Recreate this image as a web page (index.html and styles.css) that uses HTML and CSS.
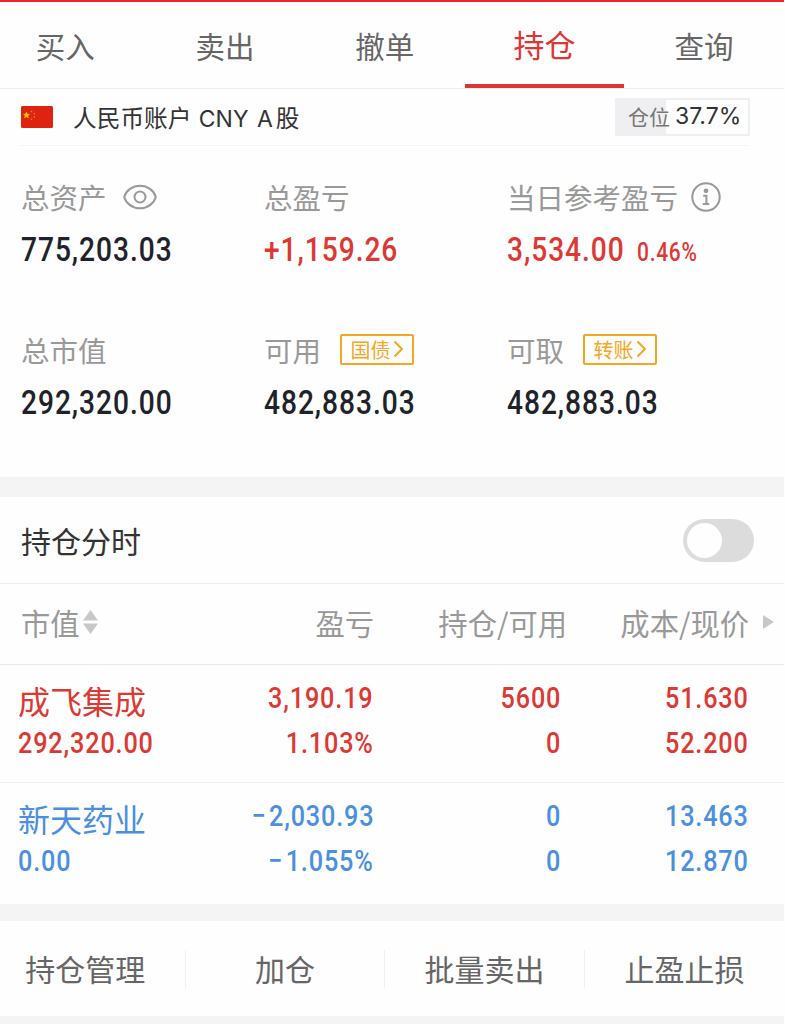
FILE: index.html
```html
<!DOCTYPE html>
<html lang="zh-CN">

<head>
    <meta charset="UTF-8">
    <meta name="viewport" content="width=device-width, initial-scale=1.0">
    <title>持仓</title>
    <link rel="stylesheet" href="styles.css">
</head>

<body>
    <div class="page">
        <div class="tabs">
            <div>买入</div>
            <div>卖出</div>
            <div>撤单</div>
            <div class="on">持仓</div>
            <div>查询</div>
        </div>

        <div class="account">
            <svg class="flag" width="32" height="22" viewBox="0 0 32 22">
                <rect width="32" height="22" rx="1.5" fill="#de2410" />
                <path d="M5.500 6.200l.9 1.900 2.100.2-1.600 1.400.5 2.100-1.900-1.100-1.900 1.100.5-2.100-1.600-1.400 2.100-.2z" fill="#ffd500" stroke="#ffb400" stroke-width=".6" />
                <g fill="#f08a1c">
                    <circle cx="10.500" cy="5.500" r=".8" />
                    <circle cx="13.300" cy="7.700" r=".8" />
                    <circle cx="13.300" cy="11" r=".8" />
                    <circle cx="10.500" cy="13.300" r=".8" />
                </g>
            </svg>
            <div class="name">人民币账户 <span>CNY A</span>股</div>
            <div class="position">仓位<span>37.7%</span></div>
        </div>

        <div class="stats">
            <div class="stat">
                <div class="label">总资产
                    <svg class="eye" width="34" height="26" viewBox="0 0 34 26" fill="none" stroke="#999" stroke-width="2">
                        <path d="M1.200 13C3 6.500 9.500 1.700 17 1.700S31 6.500 32.800 13C31 19.500 24.500 24.300 17 24.300S3 19.500 1.200 13z" />
                        <circle cx="17" cy="13" r="5.500" />
                    </svg>
                </div>
                <div class="value"><span class="num">775,203.03</span></div>
            </div>
            <div class="stat">
                <div class="label">总盈亏</div>
                <div class="value red"><span class="num">+1,159.26</span></div>
            </div>
            <div class="stat">
                <div class="label">当日参考盈亏
                    <svg class="info" width="30" height="30" viewBox="0 0 30 30" fill="none" stroke="#999" stroke-width="2">
                        <circle cx="15" cy="15" r="13.700" />
                        <circle cx="15" cy="8.800" r="2.400" fill="#999" stroke="none" />
                        <path d="M12.200 13.700h3.200v8M11.800 22h6.500" />
                    </svg>
                </div>
                <div class="value red"><span class="num">3,534.00</span><span class="num small">0.46%</span></div>
            </div>
            <div class="stat">
                <div class="label">总市值</div>
                <div class="value"><span class="num">292,320.00</span></div>
            </div>
            <div class="stat">
                <div class="label">可用
                    <div class="tag">国债<svg width="11" height="18" viewBox="0 0 11 18" fill="none" stroke="#f5a623" stroke-width="2"><path d="M1.500 1.500L9 9l-7.500 7.500" /></svg></div>
                </div>
                <div class="value"><span class="num">482,883.03</span></div>
            </div>
            <div class="stat">
                <div class="label">可取
                    <div class="tag">转账<svg width="11" height="18" viewBox="0 0 11 18" fill="none" stroke="#f5a623" stroke-width="2"><path d="M1.500 1.500L9 9l-7.500 7.500" /></svg></div>
                </div>
                <div class="value"><span class="num">482,883.03</span></div>
            </div>
        </div>

        <div class="chart-row">
            <div>持仓分时</div>
            <div class="switch"></div>
        </div>

        <div class="row head">
            <div class="sort">市值
                <svg width="15" height="24" viewBox="0 0 15 24" fill="#c8c8c8">
                    <path d="M7.500 0L15 10.500H0zM0 13.500h15L7.500 24z" />
                </svg>
            </div>
            <div>盈亏</div>
            <div>持仓/可用</div>
            <div>成本/现价</div>
            <svg class="more" width="11" height="14" viewBox="0 0 11 14" fill="#c8c8c8"><path d="M0 0l11 7-11 7z" /></svg>
        </div>

        <div class="row item red">
            <div>
                <p class="stock">成飞集成</p>
                <p><span class="num">292,320.00</span></p>
            </div>
            <div>
                <p><span class="num">3,190.19</span></p>
                <p><span class="num">1.103%</span></p>
            </div>
            <div>
                <p><span class="num">5600</span></p>
                <p><span class="num">0</span></p>
            </div>
            <div>
                <p><span class="num">51.630</span></p>
                <p><span class="num">52.200</span></p>
            </div>
        </div>

        <div class="row item blue">
            <div>
                <p class="stock">新天药业</p>
                <p><span class="num">0.00</span></p>
            </div>
            <div>
                <p><span class="num"><span class="minus">−</span>2,030.93</span></p>
                <p><span class="num"><span class="minus">−</span>1.055%</span></p>
            </div>
            <div>
                <p><span class="num">0</span></p>
                <p><span class="num">0</span></p>
            </div>
            <div>
                <p><span class="num">13.463</span></p>
                <p><span class="num">12.870</span></p>
            </div>
        </div>

        <div class="footer">
            <div>持仓管理</div>
            <div>加仓</div>
            <div>批量卖出</div>
            <div>止盈止损</div>
        </div>
    </div>
</body>

</html>
```
FILE: styles.css
```css
* {
    box-sizing: border-box;
    margin: 0;
    padding: 0;
}

body {
    background-color: #fefefe;
    font-family: "Noto Sans CJK SC", sans-serif;
    overflow: hidden;
}

.page {
    width: 784px;
    height: 1024px;
    overflow: hidden;
    background-color: #f4f4f4;
    border-top: 2px solid #f5222d;
}

.page>div {
    background-color: #fefefe;
}

.page>.tabs {
    display: flex;
    height: 87px;
    border-bottom: 1px solid #ededed;
}

.tabs>div {
    flex: none;
    width: 159.7px;
    height: 86px;
    line-height: 86px;
    text-align: center;
    font-size: 29.5px;
    color: #666;
}

.tabs>div:first-child {
    margin-left: -14.5px;
}

.tabs>div.on {
    color: #e03535;
    font-size: 31px;
    line-height: 84px;
    border-bottom: 4px solid #e03535;
}

.account {
    display: flex;
    align-items: center;
    height: 57px;
    margin: 0 35px 0 20px;
    border-bottom: 1px solid #f4f4f4;
    box-shadow: -20px 0 #fefefe, 35px 0 #fefefe;
}

.account .flag {
    margin-right: 20px;
    margin-left: 1px;
}

.account .name {
    flex: 1;
    font-size: 23.7px;
    color: #333;
}

.account .name span {
    margin: 0 3px 0 2px;
    font-family: Inter, sans-serif;
    font-size: 23px;
    word-spacing: 2px;
}

.position {
    display: flex;
    align-items: center;
    width: 135px;
    height: 38px;
    margin-right: -1px;
    padding-left: 11px;
    border: 2px solid #efeff1;
    background: linear-gradient(to right, #efeff1 37.7%, #fefefe 37.7%);
    font-size: 21px;
    line-height: 32px;
    padding-bottom: 2px;
    color: #777;
}

.position span {
    margin-left: 5px;
    font-family: Inter, sans-serif;
    font-size: 23px;
    color: #333;
}

.stats {
    display: grid;
    grid-template-columns: 243px 243px 1fr;
    grid-auto-rows: 153px;
    height: 331px;
    padding: 29px 0 0 21px;
}

.label {
    display: flex;
    align-items: center;
    height: 42px;
    font-size: 28.5px;
    color: #999;
}

.label .eye {
    margin-top: 2px;
    margin-left: 16px;
}

.label .info {
    margin-top: 2px;
    margin-left: 13px;
}

.tag {
    display: flex;
    align-items: center;
    justify-content: center;
    gap: 2px;
    width: 74px;
    height: 31px;
    margin-left: 19px;
    border: 2px solid #f5a623;
    border-radius: 2px;
    font-size: 20px;
    line-height: 27px;
    color: #f5a623;
}

.value {
    height: 60px;
    line-height: 60px;
    font-size: 33.5px;
    color: #20222a;
    white-space: nowrap;
}

.num {
    display: inline-block;
    font-family: Roboto, sans-serif;
    font-weight: 500;
    letter-spacing: .034em;
    transform: scaleX(.84);
    transform-origin: left;
}

.value .small {
    margin-left: -10px;
    font-size: 25px;
}

.chart-row {
    display: flex;
    align-items: center;
    justify-content: space-between;
    height: 87px;
    margin-top: 20px;
    padding: 0 30px 0 21px;
    border-bottom: 1px solid #ededed;
    font-size: 30px;
    color: #333;
}

.switch {
    width: 71px;
    height: 43px;
    padding: 4px;
    border-radius: 22px;
    background-color: #dcdcdc;
}

.switch::before {
    content: "";
    display: block;
    width: 35px;
    height: 35px;
    border-radius: 50%;
    background-color: #fefefe;
}

.row {
    display: grid;
    grid-template-columns: 176px 180px 193px 182px 1fr;
    padding-left: 18px;
    border-bottom: 1px solid #f1f1f1;
}

.row>div {
    text-align: right;
}

.row>div:first-child {
    text-align: left;
}

.head {
    align-items: center;
    height: 81px;
    padding-bottom: 4px;
    font-size: 29.3px;
    color: #999;
    border-color: #e8e8e8;
}

.head .sort {
    display: flex;
    align-items: center;
    gap: 3px;
    padding-left: 3px;
}

.head .more {
    margin-left: 14px;
}

.item {
    height: 118px;
    padding-top: 8px;
    font-size: 30px;
}

.item+.item {
    height: 121px;
    border: 0;
}

.item p {
    height: 45px;
    line-height: 45px;
    white-space: nowrap;
}

.item .stock {
    font-size: 32px;
    line-height: 54px;
}

.item>div:not(:first-child) .num {
    transform-origin: right;
}

.item .minus {
    margin-right: 3px;
}

.item>div:nth-child(3) {
    padding-right: 6px;
}

.page .red {
    color: #dd3833;
}

.page .blue {
    color: #4a8fe0;
}

.footer {
    display: flex;
    height: 95px;
    margin-top: 17px;
    align-items: center;
}

.footer>div {
    flex: none;
    width: 199.6px;
    height: 38px;
    line-height: 36px;
    text-align: center;
    font-size: 30px;
    color: #666;
    border-right: 1px solid #f0f0f0;
}

.footer>div:first-child {
    margin-left: -14px;
}

.footer>div:last-child {
    border: 0;
}
```
